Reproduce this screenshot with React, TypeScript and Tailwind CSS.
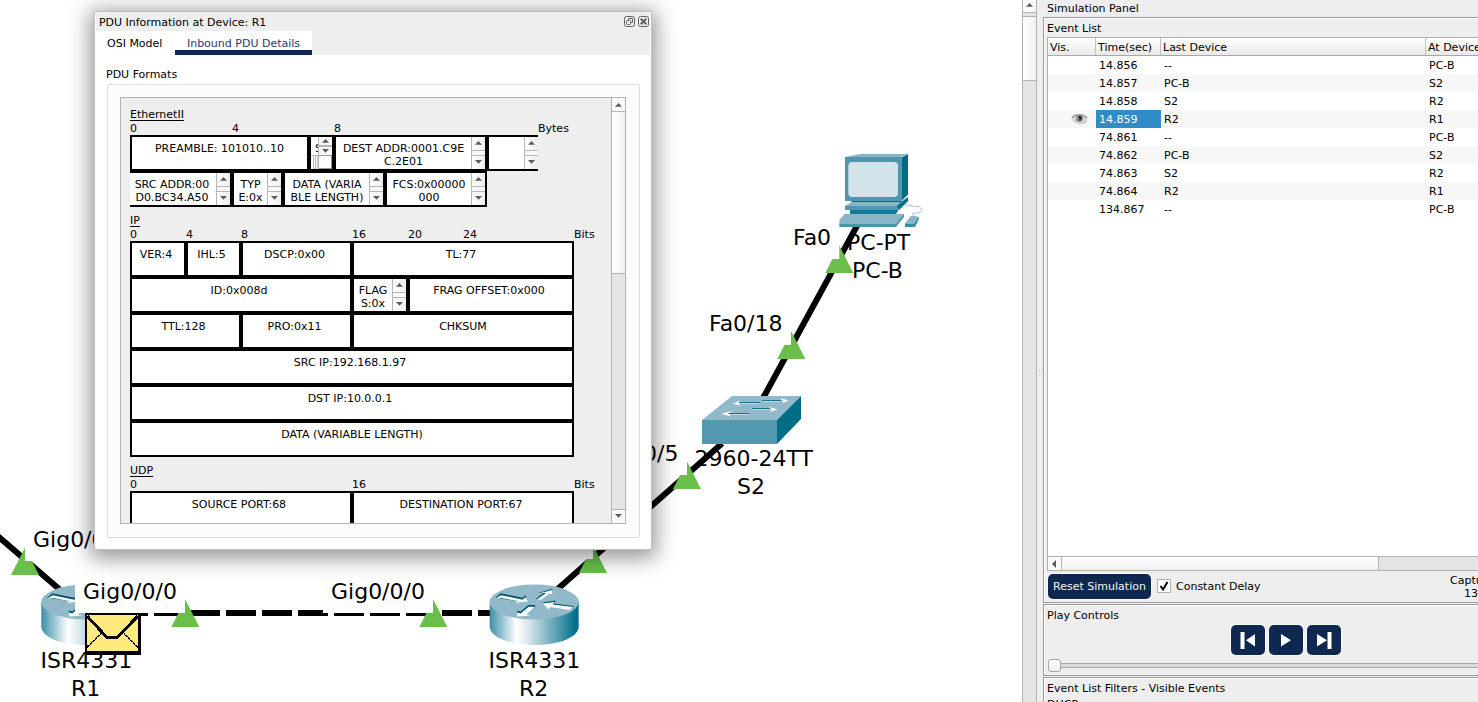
import React from "react";

type Dir = "up" | "down" | "left";

function Tri({ dir }: { dir: Dir }) {
  const points =
    dir === "up" ? "3.5,0 7,3.7 0,3.7" : dir === "down" ? "0,0 7,0 3.5,3.7" : "0,4 4,0 4,8";
  return (
    <svg
      width={dir === "left" ? 4 : 7}
      height={dir === "left" ? 8 : 4}
      className="block shrink-0"
      aria-hidden="true"
    >
      <polygon points={points} fill="#5b5b5b" />
    </svg>
  );
}

function Spin() {
  return (
    <div className="flex h-full w-[14px] shrink-0 flex-col justify-between border-l border-[#b6b6b6] bg-[#f8f8f8]">
      <div className="flex h-[14px] items-center justify-center border-b border-[#b6b6b6] bg-linear-to-r from-white to-[#ededed] pb-px">
        <Tri dir="up" />
      </div>
      <div className="flex h-[14px] items-center justify-center border-t border-[#b6b6b6] bg-linear-to-r from-white to-[#ededed] pb-px">
        <Tri dir="down" />
      </div>
    </div>
  );
}

interface CellProps {
  w: string;
  lines?: string[];
  spin?: boolean;
  edge?: string;
  pad?: string;
}

function Cell({ w, lines = [], spin = false, edge = "border-2", pad = "" }: CellProps) {
  return (
    <div className={`flex h-[36px] shrink-0 border-black bg-white ${edge} ${w}`}>
      <div className={`flex min-w-0 flex-1 flex-col items-center pt-[5px] leading-[13px] ${pad}`}>
        {lines.map((line) => (
          <span key={line} className="whitespace-nowrap">
            {line}
          </span>
        ))}
      </div>
      {spin && <Spin />}
    </div>
  );
}

function SfdCell() {
  return (
    <div className="flex h-[36px] w-[25px] shrink-0 border-2 border-black bg-white">
      <div className="flex w-[7px] flex-col overflow-hidden">
        <div className="h-[18px] overflow-hidden pt-[5px] pl-[4px] leading-[13px]">S</div>
        <div className="flex flex-1 gap-px border-t border-[#b6b6b6] pl-[2px]">
          <i className="w-px bg-[#b6b6b6]" />
          <i className="w-px bg-[#b6b6b6]" />
          <i className="w-px bg-[#c9c9c9]" />
        </div>
      </div>
      <div className="flex w-[14px] flex-col border-l border-[#b6b6b6]">
        <div className="flex h-[10px] items-center justify-center border-b-2 border-[#b6b6b6] bg-[#f6f6f6]">
          <Tri dir="up" />
        </div>
        <div className="flex h-[8px] items-center justify-center bg-[#f6f6f6] pb-px">
          <Tri dir="down" />
        </div>
        <div className="flex-1 border border-l-0 border-[#9a9a9a] bg-white" />
      </div>
    </div>
  );
}

function Section({
  title,
  ruler,
  children,
}: {
  title: string;
  ruler: [string, string][];
  children: React.ReactNode;
}) {
  return (
    <section className="mb-[6px] shrink-0">
      <div className="flex h-[14px] items-center pt-[2px]">
        <span className="underline underline-offset-2">{title}</span>
      </div>
      <div className="flex h-[14px] items-center pt-[2px]">
        {ruler.map(([t, w]) => (
          <span key={t} className={`shrink-0 ${w}`}>
            {t}
          </span>
        ))}
      </div>
      {children}
    </section>
  );
}

function PduDialog() {
  return (
    <div className="absolute top-[11px] left-[94px] flex h-[539px] w-[558px] flex-col border border-[#c0c0c0] bg-white shadow-[0_4px_20px_4px_rgba(0,0,0,0.42)]">
      <div className="mx-px flex h-[19px] shrink-0 items-center justify-between bg-[#eeeeee] pr-px pl-[3px]">
        <span className="pt-[3px] tracking-[-0.02px]">PDU Information at Device: R1</span>
        <div className="flex gap-[3px]">
          <svg width="11" height="11" fill="none" stroke="#626262">
            <rect x="0.5" y="0.5" width="10" height="10" rx="2" />
            <rect x="2.5" y="4.5" width="4" height="4" rx="1" />
            <path d="M4.5 4V2.5H8.5V6.5H7" />
          </svg>
          <svg width="11" height="11" fill="none" stroke="#626262">
            <rect x="0.5" y="0.5" width="10" height="10" rx="2" />
            <path d="M2.7 2.7L8.3 8.3M8.3 2.7L2.7 8.3" strokeWidth="2" />
          </svg>
        </div>
      </div>
      <div className="mx-px flex h-[24px] shrink-0 bg-[#eeeeee]">
        <div className="flex w-[79px] items-center bg-white pt-[2px] pl-[11px]">OSI Model</div>
        <div className="flex w-[137px] items-center justify-center border-b-[5px] border-[#0e284f] bg-white pt-[7px] text-[#1f3b68]">
          Inbound PDU Details
        </div>
      </div>
      <div className="flex min-h-0 flex-1 flex-col pt-[12px] pr-[11px] pb-[11px] pl-[12px]">
        <div className="-ml-px h-[17px] pt-px leading-[14px]">PDU Formats</div>
        <div className="flex min-h-0 flex-1 rounded-[2px] border border-[#dedede] bg-[#fcfcfc] pt-[12px] pr-[13px] pb-[13px] pl-[12px]">
          <div className="flex min-w-0 flex-1 border border-[#b2b2b2] bg-[#eeeeee]">
            <div className="flex min-w-0 flex-1 flex-col overflow-hidden pt-[9px] pl-[9px]">
              <Section
                title="EthernetII"
                ruler={[
                  ["0", "w-[102px]"],
                  ["4", "w-[102px]"],
                  ["8", "w-[204px]"],
                  ["Bytes", "w-[40px]"],
                ]}
              >
                <div className="flex w-[408px] overflow-hidden">
                  <Cell w="w-[179px]" lines={["PREAMBLE: 101010..10"]} />
                  <SfdCell />
                  <Cell w="w-[153px]" lines={["DEST ADDR:0001.C9E", "C.2E01"]} spin />
                  <Cell w="w-[53px]" spin />
                </div>
                <div className="flex">
                  <Cell
                    w="w-[102px]"
                    edge="border-2 border-l-0"
                    pad="pr-[2px]"
                    lines={["SRC ADDR:00", "D0.BC34.A50"]}
                    spin
                  />
                  <Cell w="w-[51px]" lines={["TYP", "E:0x"]} spin />
                  <Cell w="w-[102px]" lines={["DATA (VARIA", "BLE LENGTH)"]} spin />
                  <Cell w="w-[102px]" lines={["FCS:0x00000", "000"]} spin />
                </div>
              </Section>
              <Section
                title="IP"
                ruler={[
                  ["0", "w-[56px]"],
                  ["4", "w-[55px]"],
                  ["8", "w-[111px]"],
                  ["16", "w-[56px]"],
                  ["20", "w-[55px]"],
                  ["24", "w-[111px]"],
                  ["Bits", "w-[30px]"],
                ]}
              >
                <div className="flex">
                  <Cell w="w-[56px]" pad="pr-[4px]" lines={["VER:4"]} />
                  <Cell w="w-[55px]" pad="pr-[4px]" lines={["IHL:5"]} />
                  <Cell w="w-[111px]" pad="pr-[4px]" lines={["DSCP:0x00"]} />
                  <Cell w="w-[222px]" pad="pr-[4px]" lines={["TL:77"]} />
                </div>
                <div className="flex">
                  <Cell w="w-[222px]" pad="pr-[4px]" lines={["ID:0x008d"]} />
                  <Cell w="w-[56px]" lines={["FLAG", "S:0x"]} spin />
                  <Cell w="w-[166px]" pad="pr-[4px]" lines={["FRAG OFFSET:0x000"]} />
                </div>
                <div className="flex">
                  <Cell w="w-[111px]" pad="pr-[4px]" lines={["TTL:128"]} />
                  <Cell w="w-[111px]" pad="pr-[4px]" lines={["PRO:0x11"]} />
                  <Cell w="w-[222px]" lines={["CHKSUM"]} />
                </div>
                <Cell w="w-[444px]" pad="pr-[4px]" lines={["SRC IP:192.168.1.97"]} />
                <Cell w="w-[444px]" pad="pr-[4px]" lines={["DST IP:10.0.0.1"]} />
                <Cell w="w-[444px]" lines={["DATA (VARIABLE LENGTH)"]} />
              </Section>
              <Section
                title="UDP"
                ruler={[
                  ["0", "w-[222px]"],
                  ["16", "w-[222px]"],
                  ["Bits", "w-[30px]"],
                ]}
              >
                <div className="flex">
                  <Cell w="w-[222px]" pad="pr-[4px]" lines={["SOURCE PORT:68"]} />
                  <Cell w="w-[222px]" pad="pr-[4px]" lines={["DESTINATION PORT:67"]} />
                </div>
              </Section>
            </div>
            <div className="flex w-[14px] shrink-0 flex-col border-l border-[#b2b2b2] bg-[#e4e4e4]">
              <div className="flex h-[14px] items-center justify-center border-b border-[#b2b2b2] bg-[#fafafa]">
                <Tri dir="up" />
              </div>
              <div className="h-[162px] border-b border-[#b2b2b2] bg-linear-to-r from-white to-[#f0f0f0]" />
              <div className="flex-1" />
              <div className="flex h-[14px] items-center justify-center border-t border-[#b2b2b2] bg-[#fafafa] pb-px">
                <Tri dir="down" />
              </div>
            </div>
          </div>
        </div>
      </div>
    </div>
  );
}

function Router({ x }: { x: number }) {
  return (
    <g transform={`translate(${x} 584.5)`}>
      <path d="M0 17.5V43C2 54 22 60.5 44.5 60.5S87 54 89 43V17.5Z" fill="url(#metal)" />
      <ellipse cx="44.5" cy="17.5" rx="44.5" ry="17.5" fill="#91b9c9" />
      <g fill="#00566f">
        <path d="M5.500 13.500L11 8.700L33 13.300L35.500 10.500L38 16.500L30 17L8 13.500Z" />
        <path d="M46 14.500L54.500 8L48.500 8.500L62.500 4.300V8L58 8L51 15Z" />
        <path d="M52.500 18L66 16L64.500 19L84 21.500V24L60 21Z" />
        <path d="M27.500 31V26L31 27L38.500 20.500H45.500V22L36 29Z" />
      </g>
      <g fill="#fff">
        <path d="M6 14L11.500 10.700L33 15.200L35.500 12.500L38.500 16.700L25.500 18.500L28.500 16.800L12 13.500Z" />
        <path d="M47 15L56.500 8.500L51 8.500L62.500 5.500V10L60 8.800L51.500 15.300Z" />
        <path d="M53 19L65 17.500L63 20L84 22.500L80 25.500L60.500 22.500L59 25Z" />
        <path d="M27.500 32V28L31 29L39 22.200H45L36.500 30L41 31Z" />
      </g>
    </g>
  );
}

const ports = [
  [25, 547.500],
  [185.300, 599.500],
  [433.300, 599.500],
  [593, 545.500],
  [687, 461.500],
  [791.300, 331.500],
  [839.300, 245.500],
];

const portMasks = [
  [25, 516, 75, 45],
  [75, 568, 110, 45],
  [323, 568, 110, 45],
  [480, 514, 113, 45],
  [600, 430, 87, 45],
  [703, 305, 88, 40],
  [785, 214, 54.300, 45],
];

function Topology() {
  return (
    <svg width="1022" height="702" className="absolute top-0 left-0" aria-hidden="true">
      <defs>
        <linearGradient id="metal">
          <stop offset="0" stopColor="#3a8fa8" />
          <stop offset="0.3" stopColor="#fff" />
          <stop offset="0.45" stopColor="#d3e3e9" />
          <stop offset="0.97" stopColor="#00708a" />
        </linearGradient>
      </defs>
      <g stroke="#000" strokeWidth="6">
        <path d="M-3 535.500L62 591.500M556 590.500L722 443.500M762 400L858 224" />
        <path d="M82 613H492" strokeDasharray="30 6" strokeDashoffset="0" />
      </g>
      <Router x={41.300} />
      <Router x={489.700} />

      <g>
        <path d="M702 420L732 396H801L777 420Z" fill="#90b9c9" />
        <path d="M702 420H777V444H702Z" fill="#5399af" />
        <path d="M777 420L801 396V419L777 444Z" fill="#006d87" />
        <g stroke="#1d7189" strokeWidth="1">
          <path d="M738 402.500H760M762 400.500H781M727 413.500H749M752 408.500H770" />
        </g>
        <g fill="#fff">
          <path d="M732.500 403.700L740.500 400.500L738.500 403.200L741 405.800Z" />
          <path d="M788.500 400.300L782 403.500L783.500 401.300L780 398.200Z" />
          <path d="M721 413.800L733 410.800L728 413.800L731 416.500Z" />
          <path d="M777.500 409.300L769 412.500L772 410L769 407Z" />
          <path d="M740 403.300H759V404H740ZM763 401.300H782V402H763ZM729 414.300H748V415H729ZM753 409.300H771V410H753Z" opacity="0.6" />
        </g>
      </g>

      <g>
        <path d="M845 157L860 154H908L901 157Z" fill="#8ab5c6" />
        <path d="M845 157H901.500V201H845Z" fill="#4f97ad" />
        <path d="M901.500 157.500L908 154V194.500L901.500 201Z" fill="#006a84" />
        <rect x="848.300" y="162" width="49.700" height="35" rx="4" fill="#d3e3ea" />
        <path d="M851 201H903L898 203.500H854Z" fill="#006a84" />
        <path d="M850 209H899L896 214H850Z" fill="#0f7b96" />
        <path d="M845 206L852 202H901L908 197V201L898 210H845Z" fill="#4f97ad" />
        <path d="M845 206L852 202H901L897 206Z" fill="#8ab5c6" />
        <path d="M897 206L908 197V201L899 210Z" fill="#00708a" />
        <path d="M838 222L845 214H904V217L896 227H838Z" fill="#4b94ab" />
        <path d="M838 222L845 214H904L896 224H838Z" fill="#8ab5c6" />
        <path d="M905 224L911 216L919 217V219L915 227H905Z" fill="#388ba4" />
        <path d="M905 224L911 216L919 217L914 224Z" fill="#8ab5c6" />
        <path
          d="M905 206C910 203 912 208 918 206C924 209 922 214 913 213V217"
          fill="none"
          stroke="#9dc1cf"
        />
      </g>

      {ports.map(([x, y]) => (
        <path key={x} d={`M${x} ${y}L${x + 14} ${y + 27.500}H${x - 14}Z`} fill="#6abf4b" />
      ))}
      {portMasks.map(([x, y, w, h]) => (
        <rect key={x} x={x} y={y} width={w} height={h} fill="#fff" />
      ))}
    </svg>
  );
}

const labels = [
  { text: "Gig0/0/0", pos: "left-[33px] top-[526px]" },
  { text: "Gig0/0/0", pos: "left-[83px] top-[578px]" },
  { text: "Gig0/0/0", pos: "left-[331px] top-[578px]" },
  { text: "ISR4331", pos: "left-[40.5px] top-[647px]" },
  { text: "R1", pos: "left-[71px] top-[675px]" },
  { text: "ISR4331", pos: "left-[488.5px] top-[647px]" },
  { text: "R2", pos: "left-[519px] top-[675px]" },
  { text: "Fa0/5", pos: "left-[619px] top-[440px]" },
  { text: "2960-24TT", pos: "left-[694.5px] top-[445px]" },
  { text: "S2", pos: "left-[737px] top-[473px]" },
  { text: "Fa0/18", pos: "left-[709px] top-[310px]" },
  { text: "Fa0", pos: "left-[793px] top-[224px]" },
  { text: "PC-PT", pos: "left-[847px] top-[229px]" },
  { text: "PC-B", pos: "left-[852px] top-[257px]" },
];

function Envelope() {
  return (
    <svg
      width="56"
      height="42"
      shapeRendering="crispEdges"
      className="absolute top-[613px] left-[85px]"
      aria-hidden="true"
    >
      <rect width="56" height="42" fill="#000" />
      <rect x="2" y="2" width="51" height="36" fill="#ffea7d" />
      <g fill="none" stroke="#000">
        <path d="M2 3L22 24.500H32L53 3" strokeWidth="3" />
        <path d="M2 34L16 21M53 34L39 21" strokeWidth="1.500" strokeDasharray="3 0.6" />
      </g>
    </svg>
  );
}

function Workspace() {
  return (
    <main className="relative h-full w-[1022px] shrink-0 overflow-hidden bg-white">
      <Topology />
      {labels.map((l) => (
        <span
          key={l.pos}
          className={`absolute text-[22px] leading-[28px] whitespace-nowrap ${l.pos}`}
        >
          {l.text}
        </span>
      ))}
      <Envelope />
      <PduDialog />
    </main>
  );
}

const events = [
  ["14.856", "--", "PC-B"],
  ["14.857", "PC-B", "S2"],
  ["14.858", "S2", "R2"],
  ["14.859", "R2", "R1"],
  ["74.861", "--", "PC-B"],
  ["74.862", "PC-B", "S2"],
  ["74.863", "S2", "R2"],
  ["74.864", "R2", "R1"],
  ["134.867", "--", "PC-B"],
];

function Eye() {
  return (
    <svg width="17" height="12" className="block" aria-hidden="true">
      <path d="M0.500 5C4 1 12 0 16 4.500V9C12 12 4 10.500 0.500 7Z" fill="#d6d6d6" />
      <path d="M1 4.500C4 1 12 0.500 16 5" fill="none" stroke="#999" strokeWidth="1.400" />
      <path d="M3 8C6 10.500 11 11 15 9" fill="none" stroke="#bbb" />
      <circle cx="8.500" cy="5.500" r="3.200" fill="#6e6e6e" />
      <circle cx="9" cy="5" r="1.700" fill="#1c1c1c" />
      <circle cx="7" cy="5.500" r="0.800" fill="#ddd" />
    </svg>
  );
}

function EventTable() {
  return (
    <div className="ml-[3px] flex h-[534px] shrink-0 flex-col overflow-hidden border border-r-0 border-[#b2b2b2] bg-white">
      <div className="flex h-[18px] shrink-0 items-center border-b border-[#a8a8a8] bg-linear-to-b from-white to-[#e9e9e9]">
        <span className="flex h-full w-[48px] shrink-0 items-center border-r border-[#c2c2c2] pt-[3px] pl-[2px]">Vis.</span>
        <span className="flex h-full w-[65px] shrink-0 items-center border-r border-[#c2c2c2] pt-[3px] pl-[2px]">Time(sec)</span>
        <span className="flex h-full w-[265px] shrink-0 items-center border-r border-[#c2c2c2] pt-[3px] pl-[2px]">Last Device</span>
        <span className="flex h-full shrink-0 items-center pt-[3px] pl-[2px]">At Device</span>
      </div>
      <div className="flex min-h-0 flex-1 flex-col">
        {events.map(([time, last, at], i) => (
          <div
            key={time}
            className={`flex h-[18px] shrink-0 items-center ${i % 2 ? "bg-[#f7f7f7]" : "bg-white"}`}
          >
            <span className="flex w-[48px] shrink-0 pl-[23px]">{time === "14.859" && <Eye />}</span>
            <span
              className={`flex h-full w-[65px] shrink-0 items-center pt-[2px] pl-[3px] ${time === "14.859" ? "bg-[#308cc6] text-white" : ""}`}
            >
              {time}
            </span>
            <span className="w-[265px] shrink-0 pt-[2px] pl-[3px]">{last}</span>
            <span className="shrink-0 pt-[2px] pl-[3px]">{at}</span>
          </div>
        ))}
      </div>
      <div className="flex h-[14px] shrink-0 border-t border-[#b2b2b2] bg-[#e4e4e4]">
        <div className="flex w-[14px] items-center justify-center border-r border-[#b2b2b2] bg-[#fafafa] pr-px">
          <Tri dir="left" />
        </div>
        <div className="w-[317px] border-r border-[#b2b2b2] bg-linear-to-b from-white to-[#f0f0f0]" />
      </div>
    </div>
  );
}

function PlayButton({ d, label }: { d: string; label: string }) {
  return (
    <button
      aria-label={label}
      className="flex h-[30px] w-[34px] items-center justify-center rounded-[5px] bg-[#0e284f] shadow-[0_0_1px_1px_#fafafa]"
    >
      <svg width="34" height="30" aria-hidden="true">
        <path d={d} fill="#fff" />
      </svg>
    </button>
  );
}

const group = "ml-[6px] shrink-0 border border-r-0 border-[#9c9c9c] shadow-[inset_1px_1px_0_#fff]";

function SimulationPanel() {
  return (
    <aside className="relative flex h-full w-[441px] shrink-0 flex-col overflow-hidden bg-[#eeeeee]">
      <div className="h-[17px] shrink-0 pt-[2px] pl-[10px] leading-[14px]">Simulation Panel</div>
      <div className={`${group} mb-px flex h-[586px] flex-col`}>
        <div className="h-[19px] shrink-0 pt-[4px] pl-[3px] leading-[14px]">Event List</div>
        <EventTable />
        <div className="flex pt-[3px] pl-[4px]">
          <button className="flex h-[25px] w-[103px] shrink-0 items-center justify-center rounded-[5px] bg-[#0e284f] pt-[2px] whitespace-nowrap text-[#f4f4f4] shadow-[0_0_1px_1px_#fafafa]">
            Reset Simulation
          </button>
          <div className="mt-[5px] ml-[6px] size-[14px] shrink-0 border border-[#b4b4b4] bg-white">
            <svg width="12" height="12" className="block" aria-hidden="true">
              <path d="M2.500 6L5 9.500L9.500 2" fill="none" stroke="#000" strokeWidth="2" />
            </svg>
          </div>
          <span className="mt-[6px] ml-[5px] w-[270px] shrink-0 leading-[14px]">Constant Delay</span>
          <div className="shrink-0 leading-[13px] whitespace-nowrap">
            <div className="pl-[4px]">Captured to:</div>
            <div className="pl-[18px]">134.867 s</div>
          </div>
        </div>
      </div>
      <div className={`${group} mb-px flex h-[72px] flex-col`}>
        <div className="h-[20px] shrink-0 pt-[4px] pl-[3px] leading-[14px]">Play Controls</div>
        <div className="flex gap-[4px] pl-[187px]">
          <PlayButton label="Back" d="M9.500 7h4v17h-4zM24 9v12.500L15 15.200z" />
          <PlayButton label="Play" d="M12 9v12.500L22 15.200z" />
          <PlayButton label="Forward" d="M20.500 7h4v17h-4zM10 9v12.500L20 15.200z" />
        </div>
        <div className="mt-[4px] flex items-center pl-[4px]">
          <div className="size-[13px] shrink-0 rounded-[3px] border border-[#a5a5a5] bg-linear-to-b from-white to-[#f1f1f1]" />
          <div className="h-[5px] flex-1 border-y border-[#a8a8a8] bg-[#d9d9d9]" />
        </div>
      </div>
      <div className={`${group} flex-1`}>
        <div className="pt-[4px] pl-[3px] leading-[14px]">Event List Filters - Visible Events</div>
        <div className="pt-[2px] pl-[3px] leading-[14px]">DHCP</div>
      </div>
      <div className="absolute top-[370px] left-[2px] flex gap-[2px]">
        <i className="size-px bg-[#aaa]" />
        <i className="size-px bg-[#aaa]" />
      </div>
    </aside>
  );
}

export default function App() {
  return (
    <div className="flex h-[702px] w-[1478px] overflow-hidden bg-white font-['DejaVu_Sans',sans-serif] text-[11px] text-black">
      <Workspace />
      <div className="flex w-[15px] shrink-0 flex-col border-x border-[#b2b2b2] bg-[#e4e4e4]">
        <div className="flex h-[13px] items-center justify-center border-b border-[#b2b2b2] bg-[#fafafa] pb-[2px]">
          <Tri dir="up" />
        </div>
        <div className="mt-[3px] h-[65px] border-y border-[#b2b2b2] bg-linear-to-r from-white to-[#f0f0f0]" />
      </div>
      <SimulationPanel />
    </div>
  );
}
